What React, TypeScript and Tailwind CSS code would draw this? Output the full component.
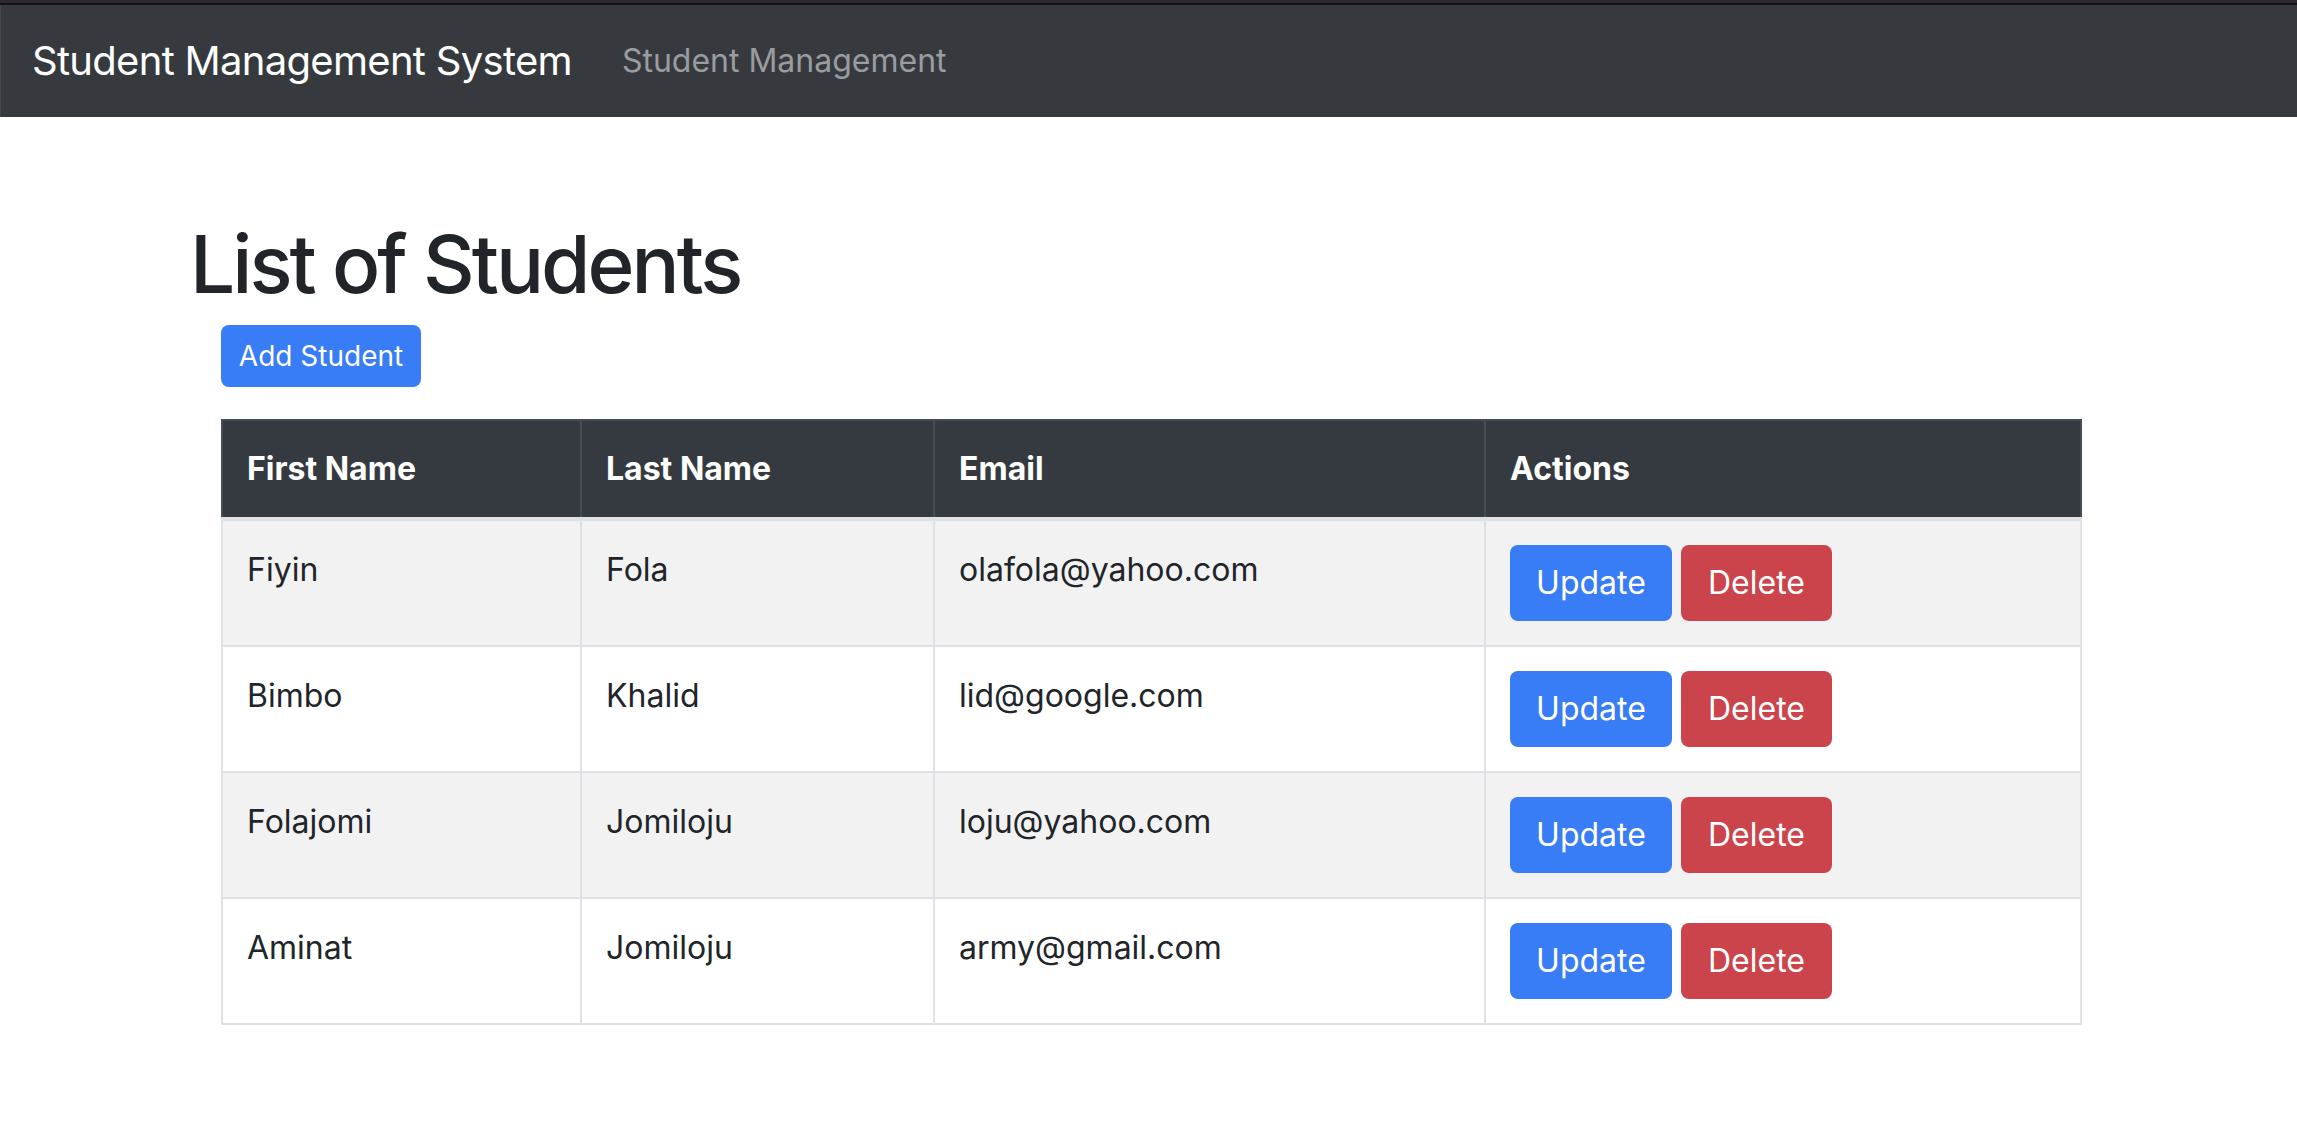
import React from "react";

type Student = { first: string; last: string; email: string };

const students: Student[] = [
  { first: "Fiyin", last: "Fola", email: "olafola@yahoo.com" },
  { first: "Bimbo", last: "Khalid", email: "lid@google.com" },
  { first: "Folajomi", last: "Jomiloju", email: "loju@yahoo.com" },
  { first: "Aminat", last: "Jomiloju", email: "army@gmail.com" },
];

const Navbar = () => (
  <div>
    <div className="h-[3px] bg-[#2b2a30]" />
    <div className="h-[2px] bg-[#131315]" />
    <nav className="h-[112px] bg-[#363a3f] flex items-center pl-[31px] border-l border-[#43474c]">
      <a className="text-[40px] leading-[60px] tracking-[-0.7px] text-white">Student Management System</a>
      <a className="ml-[50px] text-[32px] leading-[48px] text-[#9a9c9f]">Student Management</a>
    </nav>
  </div>
);

const StudentTable = () => (
  <table className="mt-[32px] ml-[31px] w-[1859px] table-fixed border-collapse text-[32px] leading-[48px] text-[#212529]">
    <colgroup>
      <col className="w-[359px]" />
      <col className="w-[353px]" />
      <col className="w-[551px]" />
      <col className="w-[596px]" />
    </colgroup>
    <thead>
      <tr className="bg-[#353a40] text-white">
        {["First Name", "Last Name", "Email", "Actions"].map((h) => (
          <th
            key={h}
            className="border-2 border-[#454d55] border-b-4 border-b-[#dee2e6] p-[24px] text-left align-top font-bold"
          >
            {h}
          </th>
        ))}
      </tr>
    </thead>
    <tbody>
      {students.map((s, i) => (
        <tr key={s.first} className={i % 2 === 0 ? "bg-[#f2f2f2]" : "bg-white"}>
          <td className="border-2 border-[#dee2e6] px-[24px] pt-[25px] pb-[23px] align-top">{s.first}</td>
          <td className="border-2 border-[#dee2e6] px-[24px] pt-[25px] pb-[23px] align-top">{s.last}</td>
          <td className="border-2 border-[#dee2e6] px-[24px] pt-[25px] pb-[23px] align-top">{s.email}</td>
          <td className="border-2 border-[#dee2e6] p-[24px] align-top">
            <div className="flex gap-[9px]">
              <button className="w-[162px] h-[76px] rounded-[8px] bg-[#387cf6] text-white text-[32px] leading-[48px]">
                Update
              </button>
              <button className="w-[151px] h-[76px] rounded-[8px] bg-[#cb444b] text-white text-[32px] leading-[48px]">
                Delete
              </button>
            </div>
          </td>
        </tr>
      ))}
    </tbody>
  </table>
);

export default function App() {
  return (
    <div className="min-h-screen bg-white font-['Inter',sans-serif]">
      <Navbar />
      <main className="pl-[190px] pt-[99px]">
        <h1 className="text-[80px] leading-[96px] font-medium tracking-[-3px] text-[#212529]">List of Students</h1>
        <button className="mt-[13px] ml-[31px] w-[200px] h-[62px] rounded-[8px] bg-[#387cf6] text-white text-[28px] leading-[42px]">
          Add Student
        </button>
        <StudentTable />
      </main>
    </div>
  );
}
